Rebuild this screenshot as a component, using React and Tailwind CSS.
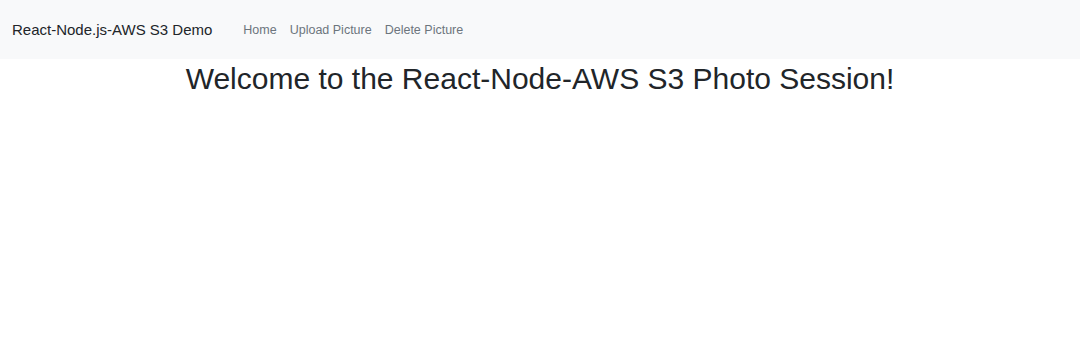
export default function App() {
  return (
    <div className="min-h-[347px] bg-white font-['Liberation_Sans',Arial,sans-serif] text-[#212529]">
      {/* Navbar */}
      <nav className="flex h-[59px] items-center bg-[#f8f9fa] px-3">
        <span className="mr-[31px] pt-[1px] text-[15px]">React-Node.js-AWS S3 Demo</span>
        <div className="flex gap-[13px] pt-[2px] text-[12.5px] text-[#6c757d]">
          <a href="#">Home</a>
          <a href="#">Upload Picture</a>
          <a href="#">Delete Picture</a>
        </div>
      </nav>

      <h1 className="mt-[2px] text-center text-[30px] leading-[36px]">
        Welcome to the React-Node-AWS S3 Photo Session!
      </h1>
    </div>
  )
}
